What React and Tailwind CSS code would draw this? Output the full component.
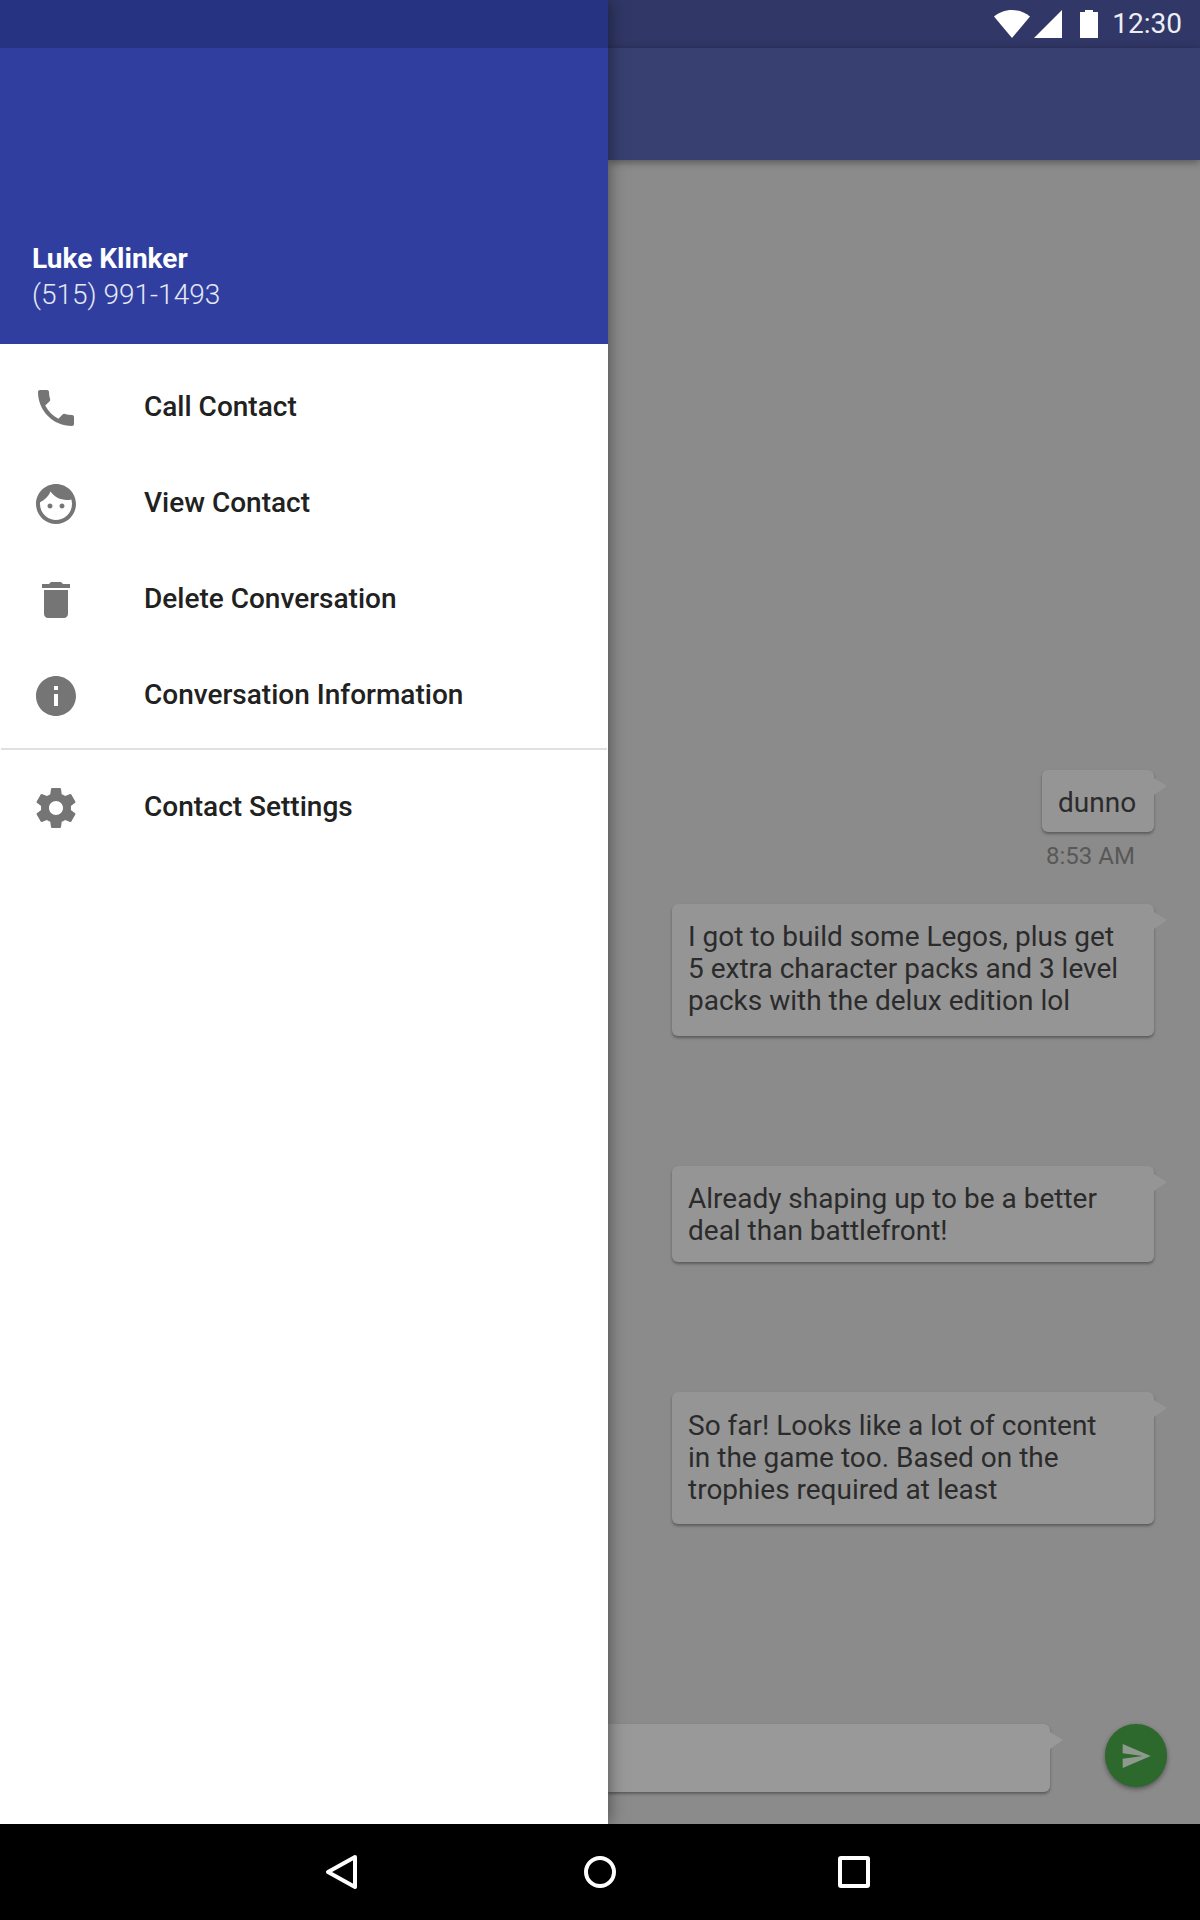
const P = {
  phone: "M6.62 10.79c1.44 2.83 3.76 5.14 6.59 6.59l2.2-2.2c.27-.27.67-.36 1.02-.24 1.12.37 2.33.57 3.57.57.55 0 1 .45 1 1V20c0 .55-.45 1-1 1-9.39 0-17-7.61-17-17 0-.55.45-1 1-1h3.5c.55 0 1 .45 1 1 0 1.25.2 2.45.57 3.57.11.35.03.74-.25 1.02l-2.2 2.2z",
  face: "M9 11.75c-.69 0-1.25.56-1.25 1.25s.56 1.25 1.25 1.25 1.25-.56 1.25-1.25-.56-1.25-1.25-1.25zm6 0c-.69 0-1.25.56-1.25 1.25s.56 1.25 1.25 1.25 1.25-.56 1.25-1.25-.56-1.25-1.25-1.25zM12 2C6.48 2 2 6.48 2 12s4.48 10 10 10 10-4.48 10-10S17.52 2 12 2zm0 18c-4.41 0-8-3.59-8-8 0-.29.02-.58.05-.86 2.36-1.05 4.23-2.98 5.21-5.37C11.07 8.33 14.05 10 17.42 10c.78 0 1.53-.09 2.25-.26.21.71.33 1.47.33 2.26 0 4.41-3.59 8-8 8z",
  trash: "M6 19c0 1.1.9 2 2 2h8c1.1 0 2-.9 2-2V7H6v12zM19 4h-3.5l-1-1h-5l-1 1H5v2h14V4z",
  info: "M12 2C6.48 2 2 6.48 2 12s4.48 10 10 10 10-4.48 10-10S17.52 2 12 2zm1 15h-2v-6h2v6zm0-8h-2V7h2v2z",
  gear: "M19.43 12.98c.04-.32.07-.64.07-.98s-.03-.66-.07-.98l2.11-1.65c.19-.15.24-.42.12-.64l-2-3.46c-.12-.22-.39-.3-.61-.22l-2.49 1c-.52-.4-1.08-.73-1.69-.98l-.38-2.65C14.46 2.18 14.25 2 14 2h-4c-.25 0-.46.18-.49.42l-.38 2.65c-.61.25-1.17.59-1.69.98l-2.49-1c-.23-.09-.49 0-.61.22l-2 3.46c-.13.22-.07.49.12.64l2.11 1.65c-.04.32-.07.65-.07.98s.03.66.07.98l-2.11 1.65c-.19.15-.24.42-.12.64l2 3.46c.12.22.39.3.61.22l2.49-1c.52.4 1.08.73 1.69.98l.38 2.65c.03.24.24.42.49.42h4c.25 0 .46-.18.49-.42l.38-2.65c.61-.25 1.17-.59 1.69-.98l2.49 1c.23.09.49 0 .61-.22l2-3.46c.12-.22.07-.49-.12-.64l-2.11-1.65zM12 15.5c-1.93 0-3.5-1.57-3.5-3.5s1.57-3.5 3.5-3.5 3.5 1.57 3.5 3.5-1.57 3.5-3.5 3.5z",
};

function Row({ d, label }) {
  return (
    <div className="flex h-[96px] items-center pl-[32px]">
      <svg viewBox="0 0 24 24" className="h-[48px] w-[48px] fill-[#757575]"><path d={d} /></svg>
      <span className="mb-[2px] ml-[64px] text-[28px] font-medium text-[#212121]">{label}</span>
    </div>
  );
}

function Tail({ color }) {
  return (
    <svg viewBox="0 0 13 17" className="absolute left-full top-[8px] h-[17px] w-[13px]">
      <polygon points="0,0 13,8 0,17" fill={color} />
    </svg>
  );
}

function Bubble({ children, className }) {
  return (
    <div className={`relative rounded-[6px] bg-[#959595] px-[16px] text-[28px] leading-[32px] text-[#2b2b2b] shadow-[0_2px_3px_rgba(0,0,0,0.35)] ${className}`}>
      <Tail color="#959595" />
      {children}
    </div>
  );
}

export default function App() {
  return (
    <div className="flex h-[1920px] w-[1200px] flex-col overflow-hidden bg-black font-['Roboto',sans-serif]">
      <div className="flex h-[1824px]">
        <div className="relative z-20 flex w-[608px] flex-col bg-white shadow-[0_0_16px_rgba(0,0,0,0.5)]">
          <div className="h-[48px] bg-[#263282]" />
          <div className="flex h-[296px] flex-col justify-end bg-[#303f9f] pb-[31px] pl-[32px] text-white">
            <div className="text-[28px] font-bold leading-[36px]">Luke Klinker</div>
            <div className="text-[28px] font-light leading-[36px] text-[#e6e8f4]">(515) 991-1493</div>
          </div>
          <div className="pt-[16px]">
            <Row d={P.phone} label="Call Contact" />
            <Row d={P.face} label="View Contact" />
            <Row d={P.trash} label="Delete Conversation" />
            <Row d={P.info} label="Conversation Information" />
            <div className="mx-px mt-[4px] h-[2px] bg-[#e0e0e0]" />
            <div className="mt-[10px]"><Row d={P.gear} label="Contact Settings" /></div>
          </div>
        </div>

        <div className="flex min-w-0 flex-1 flex-col bg-[#8b8b8b]">
          <div className="flex h-[48px] items-center justify-end bg-[#313766] pr-[18px]">
            <svg viewBox="0 0 36 28" className="h-[28px] w-[36px]"><path d="M18 28 0 6.5C5 2.6 11 0 18 0s13 2.6 18 6.5z" fill="#fff" /></svg>
            <svg viewBox="0 0 28 28" className="ml-[4px] h-[28px] w-[28px]"><polygon points="0,28 28,0 28,28" fill="#fff" /></svg>
            <svg viewBox="0 0 18 28" className="ml-[18px] h-[28px] w-[18px]"><path d="M0 2h5V0h8v2h5v26H0z" fill="#fff" /></svg>
            <span className="ml-[14px] text-[28px] leading-[32px] text-[#eceef4]">12:30</span>
          </div>
          <div className="relative z-10 h-[112px] bg-[#374070] shadow-[0_2px_8px_rgba(0,0,0,0.4)]" />
          <div className="flex flex-1 flex-col items-end pr-[46px]">
            <Bubble className="mt-[610px] h-[62px] w-[112px] pt-[17px]">dunno</Bubble>
            <div className="mt-[8px] w-[112px] pl-[4px] text-[24px] leading-[32px] text-[#585858]">8:53 AM</div>
            <Bubble className="mt-[32px] w-[482px] pb-[19px] pt-[17px]">
              I got to build some Legos, plus get<br />5 extra character packs and 3 level<br />packs with the delux edition lol
            </Bubble>
            <Bubble className="mt-[130px] w-[482px] pb-[15px] pt-[17px]">
              Already shaping up to be a better<br />deal than battlefront!
            </Bubble>
            <Bubble className="mt-[130px] w-[482px] py-[18px]">
              So far! Looks like a lot of content<br />in the game too. Based on the<br />trophies required at least
            </Bubble>
          </div>
          <div className="mb-[32px] flex items-start pr-[33px]">
            <div className="relative h-[68px] w-[442px] rounded-r-[6px] bg-[#999999] shadow-[0_2px_3px_rgba(0,0,0,0.35)]">
              <Tail color="#999999" />
            </div>
            <div className="ml-[55px] flex h-[63px] w-[62px] items-center justify-center rounded-full bg-[#2d682d] shadow-[0_2px_5px_rgba(0,0,0,0.4)]">
              <svg viewBox="0 0 24 24" className="h-[32px] w-[32px]"><path d="M2.01 21L2 14l15-2-15-2 .01-7L23 12 2.01 21z" fill="#8f9a8f" /></svg>
            </div>
          </div>
        </div>
      </div>

      <div className="flex h-[96px] items-center bg-black pl-[324px]">
        <svg viewBox="0 0 34 36" className="h-[36px] w-[34px]"><path d="M31 3 4 18l27 15z" fill="none" stroke="#fff" strokeWidth="4" strokeLinejoin="round" /></svg>
        <div className="ml-[226px] h-[32px] w-[32px] rounded-full border-[4px] border-white" />
        <div className="ml-[222px] h-[32px] w-[32px] rounded-[3px] border-[4px] border-white" />
      </div>
    </div>
  );
}
